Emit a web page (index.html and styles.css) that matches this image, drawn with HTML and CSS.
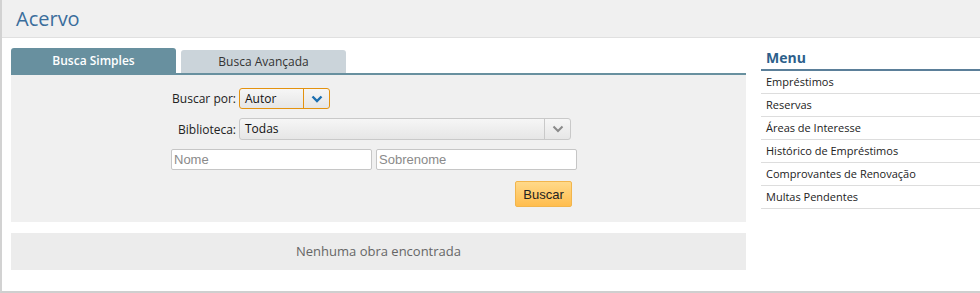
FILE: index.html
```html
<!DOCTYPE html>
<html lang="pt-br">
<head>
  <meta charset="UTF-8">
  <title>Acervo</title>
  <link rel="stylesheet" href="styles.css">
</head>
<body>
  <div class="page">
    <div class="header">
      <h1>Acervo</h1>
    </div>
    <div class="content">
      <div class="main">
        <div class="tabs">
          <div class="tab active">Busca Simples</div>
          <div class="tab">Busca Avançada</div>
        </div>
        <div class="form-panel">
          <div class="form">
            <div class="row">
              <label class="label">Buscar por:</label>
              <div class="select select-focus select-small">
                <span class="select-text">Autor</span>
                <span class="select-arrow">
                  <svg width="12" height="8" viewBox="0 0 12 8"><path d="M1.5 1.5 L6 6 L10.5 1.5" fill="none" stroke="#1c6fb0" stroke-width="2.4"/></svg>
                </span>
              </div>
            </div>
            <div class="row">
              <label class="label">Biblioteca:</label>
              <div class="select select-wide">
                <span class="select-text">Todas</span>
                <span class="select-arrow">
                  <svg width="12" height="8" viewBox="0 0 12 8"><path d="M1.5 1.5 L6 6 L10.5 1.5" fill="none" stroke="#8a8a8a" stroke-width="2"/></svg>
                </span>
              </div>
            </div>
            <div class="row">
              <input class="field" type="text" placeholder="Nome">
              <input class="field" type="text" placeholder="Sobrenome">
            </div>
            <div class="row row-end">
              <button class="btn">Buscar</button>
            </div>
          </div>
        </div>
        <div class="result">Nenhuma obra encontrada</div>
      </div>
      <div class="sidebar">
        <h2>Menu</h2>
        <ul class="menu">
          <li>Empréstimos</li>
          <li>Reservas</li>
          <li>Áreas de Interesse</li>
          <li>Histórico de Empréstimos</li>
          <li>Comprovantes de Renovação</li>
          <li>Multas Pendentes</li>
        </ul>
      </div>
    </div>
  </div>
</body>
</html>
```

FILE: styles.css
```css
body {
  margin: 0;
  font-family: "Open Sans", Arial, sans-serif;
  background-color: #fff;
}
.page {
  height: 291px;
  border-left: 2px solid #d2d2d2;
  border-bottom: 2px solid #cfcfcf;
  overflow: hidden;
}
.header {
  height: 37px;
  background-color: #f0f0f0;
  border-bottom: 1px solid #e0e0e0;
  padding-left: 14px;
}
h1 {
  margin: 0;
  font-size: 20px;
  font-weight: normal;
  line-height: 38px;
  color: #3a6d9c;
}
.content {
  display: flex;
  gap: 15px;
  padding: 10px 0 0 9px;
}
.main {
  width: 735px;
}
.tabs {
  display: flex;
  align-items: flex-end;
  gap: 5px;
  height: 25px;
  border-bottom: 2px solid #68909f;
}
.tab {
  width: 165px;
  height: 23px;
  line-height: 24px;
  text-align: center;
  font-size: 12px;
  color: #333;
  background-color: #cbd4da;
  border-radius: 3px 3px 0 0;
}
.tab.active {
  height: 25px;
  line-height: 25px;
  background-color: #68909f;
  color: #fff;
  font-weight: 600;
}
.form-panel {
  background-color: #f0f0f0;
  height: 134px;
  padding-top: 13px;
}
.form {
  width: 407px;
  margin-left: 160px;
}
.row {
  display: flex;
  align-items: center;
  gap: 3px;
  margin-bottom: 9px;
}
.label {
  width: 65px;
  text-align: right;
  font-size: 12px;
  color: #222;
}
.select {
  display: flex;
  box-sizing: border-box;
  height: 22px;
  border: 1px solid #c9c9c9;
  border-radius: 3px;
  background: linear-gradient(#f6f6f6, #e6e6e6);
}
.select-small {
  width: 91px;
  height: 21px;
}
.select-wide {
  width: 332px;
}
.select-focus {
  border-color: #e3920f;
}
.select-text {
  flex: 1;
  padding-left: 5px;
  font-size: 12px;
  line-height: 20px;
  color: #111;
}
.select-arrow {
  display: flex;
  align-items: center;
  justify-content: center;
  width: 25px;
  border-left: 1px solid #c9c9c9;
}
.select-focus .select-arrow {
  border-left-color: #e3920f;
}
.row:nth-child(3) {
  gap: 4px;
  margin-bottom: 11px;
}
.field {
  box-sizing: border-box;
  width: 201px;
  height: 21px;
  margin: 0;
  padding: 0 2px;
  border: 1px solid #c6c6c6;
  border-radius: 2px;
  font-family: "Liberation Sans", Arial, sans-serif;
  font-size: 13px;
  background-color: #fff;
}
.field::placeholder {
  color: #8a8a8a;
}
.row-end {
  justify-content: flex-end;
  padding-right: 6px;
}
.btn {
  width: 57px;
  height: 26px;
  padding: 0;
  border: 1px solid #f2b54c;
  border-radius: 2px;
  background: linear-gradient(#ffd98a, #ffbd4e);
  font-family: "Liberation Sans", Arial, sans-serif;
  font-size: 13px;
  color: #222;
}
.result {
  margin-top: 11px;
  height: 37px;
  line-height: 37px;
  background-color: #ececec;
  text-align: center;
  font-size: 13px;
  color: #666;
}
.sidebar {
  flex: 1;
}
h2 {
  margin: 0;
  height: 21px;
  line-height: 19px;
  padding-left: 5px;
  font-size: 14px;
  font-weight: bold;
  color: #2d5f8b;
  border-bottom: 2px solid #5b7f99;
}
.menu {
  list-style: none;
  margin: 0;
  padding: 0;
}
.menu li {
  height: 22px;
  line-height: 22px;
  padding-left: 5px;
  font-size: 11px;
  color: #222;
  border-bottom: 1px solid #dddddd;
}
```
